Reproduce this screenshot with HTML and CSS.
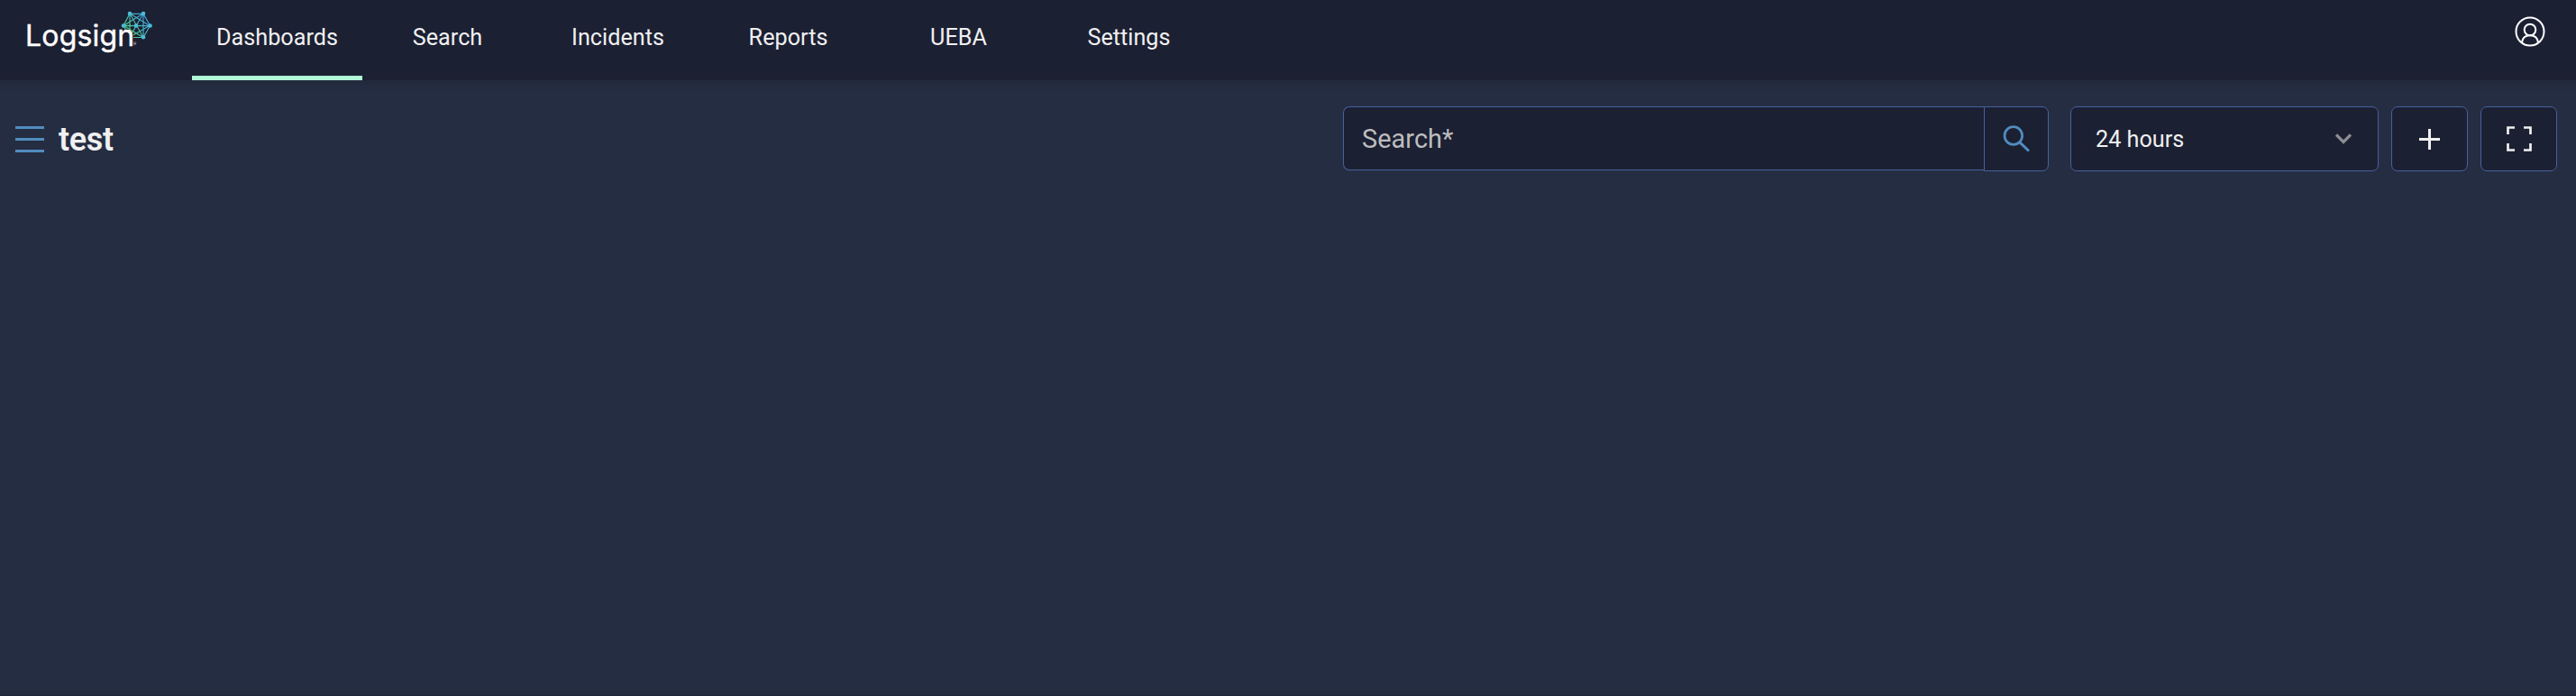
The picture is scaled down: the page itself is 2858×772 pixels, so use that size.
FILE: index.html
```html
<!DOCTYPE html>
<html lang="en">

<head>
    <meta charset="UTF-8">
    <meta name="viewport" content="width=device-width, initial-scale=1.0">
    <title>Logsign</title>
    <link rel="stylesheet" href="styles.css">
</head>

<body>

    <header>
        <a class="logo" href="#">
            <svg width="220" height="89" viewBox="0 0 220 89" fill="none">
                <defs>
                    <linearGradient id="mesh" gradientUnits="userSpaceOnUse" x1="137" y1="38" x2="162" y2="18">
                        <stop offset="0" stop-color="#4fd070" />
                        <stop offset="1" stop-color="#3f9fe0" />
                    </linearGradient>
                </defs>
                <g stroke="url(#mesh)" stroke-width="1.200">
                    <path d="M144 15.4H159L166.500 28.500L159 41.500H147M144 15L137 28.500L144 41" />
                    <path d="M137 28.400L166 28.600M144 15L159 41.500M159 15L144 41M144 15L166 28.500L144 41M159 15L137 28.500L159 41.500M144 15V40M159 15V41" />
                </g>
                <g fill="#4cbcd4">
                    <circle cx="144" cy="15" r="2.300" />
                    <circle cx="159" cy="15" r="2.300" />
                    <circle cx="137" cy="28.500" r="2.300" />
                    <circle cx="151" cy="28.500" r="2.300" />
                    <circle cx="166.500" cy="28.500" r="2.300" />
                    <circle cx="159" cy="41.300" r="2.300" />
                </g>
                <!-- keeps the mesh clear of the last letter -->
                <path d="M129 52V38Q130 33 138 33Q148 33 148 41V52Z" fill="#1c2033" />
            </svg>
            <span class="logo-text">Logsign</span>
            <span class="logo-mark">®</span>
        </a>
        <nav>
            <a class="active" href="#">Dashboards</a>
            <a href="#">Search</a>
            <a href="#">Incidents</a>
            <a href="#">Reports</a>
            <a href="#">UEBA</a>
            <a href="#">Settings</a>
        </nav>
        <a class="profile" href="#">
            <svg width="34" height="34" viewBox="0 0 34 34" fill="none" stroke="#fff" stroke-width="2">
                <circle cx="17" cy="17" r="15.500" />
                <circle cx="17" cy="15" r="6.300" />
                <path d="M7.800 29.500C8.500 24.500 12 21.300 17 21.300S25.500 24.500 26.200 29.500" />
            </svg>
        </a>
    </header>

    <main>
        <div class="toolbar">
            <div class="menu-btn">
                <span></span>
                <span></span>
                <span></span>
            </div>
            <h1>test</h1>
            <div class="search-container">
                <input type="text" placeholder="Search*">
                <button>
                    <svg width="30" height="30" viewBox="0 0 30 30" fill="none" stroke="#508dbf" stroke-width="2.700">
                        <circle cx="11.800" cy="11.500" r="9.800" />
                        <path d="M18.800 18.800L29 28.500" stroke-width="3" />
                    </svg>
                </button>
            </div>
            <div class="time-select">
                <span>24 hours</span>
                <svg width="18" height="12" viewBox="0 0 18 12" fill="none" stroke="#8e8e92" stroke-width="3.200">
                    <path d="M1 1.500L9 9.500L17 1.500" />
                </svg>
            </div>
            <button class="icon-btn">
                <svg width="23" height="23" viewBox="0 0 23 23" fill="none" stroke="#f0f0f0" stroke-width="3">
                    <path d="M11.500 0V23M0 11.500H23" />
                </svg>
            </button>
            <button class="icon-btn">
                <svg width="28" height="28" viewBox="0 0 28 28" fill="none" stroke="#f0f0f0" stroke-width="2.700">
                    <path d="M1.500 9V1.500H9M19 1.500H26.500V9M26.500 19V26.500H19M9 26.500H1.500V19" />
                </svg>
            </button>
        </div>
    </main>

</body>

</html>
```

FILE: styles.css
```css
* {
    box-sizing: border-box;
    margin: 0;
    padding: 0;
    font-family: Roboto, sans-serif;
}

body {
    background-color: #252d42;
    border-bottom: 1px solid #1f2638;
    color: #f0f0f0;
    height: 100vh;
    overflow: hidden;
}

a {
    color: inherit;
    text-decoration: none;
}

header {
    display: flex;
    height: 89px;
    background-color: #1c2033;
    box-shadow: 0 4px 6px rgba(32, 38, 52, 0.4);
}

.logo {
    position: relative;
    width: 213px;
}

.logo svg {
    position: absolute;
    top: 0;
    left: 0;
}

.logo-text {
    position: absolute;
    top: 16px;
    left: 28px;
    font-family: Inter, sans-serif;
    font-size: 32px;
    line-height: 48px;
    letter-spacing: 0.2px;
    color: #fff;
    -webkit-text-stroke: 0.4px #fff;
}

.logo-mark {
    position: absolute;
    top: 46px;
    left: 148px;
    font-size: 4px;
    line-height: 5px;
}

nav {
    display: flex;
}

nav a {
    width: 189px;
    height: 89px;
    border-bottom: 5px solid transparent;
    font-size: 25.2px;
    line-height: 83px;
    text-align: center;
}

nav a.active {
    border-bottom-color: #aff8d8;
}

.profile {
    margin: 18px 34px 0 auto;
}

.toolbar {
    display: flex;
    align-items: flex-start;
    padding: 29px 21px 0 17px;
}

.menu-btn {
    display: flex;
    flex-direction: column;
    justify-content: space-between;
    width: 32px;
    height: 29px;
    margin-top: 22px;
}

.menu-btn span {
    height: 3px;
    background-color: #508dbf;
}

h1 {
    margin-left: 16px;
    font-size: 36px;
    font-weight: 600;
    letter-spacing: -0.3px;
    line-height: 74px;
}

.search-container {
    display: flex;
    align-items: flex-start;
    width: 783px;
    margin-left: auto;
}

.search-container input {
    flex: 1;
    height: 71px;
    padding: 0 20px;
    background-color: #1c2033;
    border: 1px solid #46619f;
    border-right: none;
    border-radius: 7px 0 0 7px;
    font-size: 29px;
    color: #f0f0f0;
}

.search-container input::placeholder {
    color: #bdbdbd;
}

button {
    display: flex;
    align-items: center;
    justify-content: center;
    height: 72px;
    background-color: #1c2033;
    border: 1px solid #46619f;
    border-radius: 7px;
    cursor: pointer;
}

.search-container button {
    width: 72px;
    border-radius: 0 7px 7px 0;
}

.time-select {
    display: flex;
    align-items: center;
    justify-content: space-between;
    width: 342px;
    height: 72px;
    margin-left: 24px;
    padding: 0 29px 0 27px;
    background-color: #1c2033;
    border: 1px solid #46619f;
    border-radius: 7px;
    font-size: 25.2px;
}

.icon-btn {
    width: 85px;
    margin-left: 14px;
}
```
